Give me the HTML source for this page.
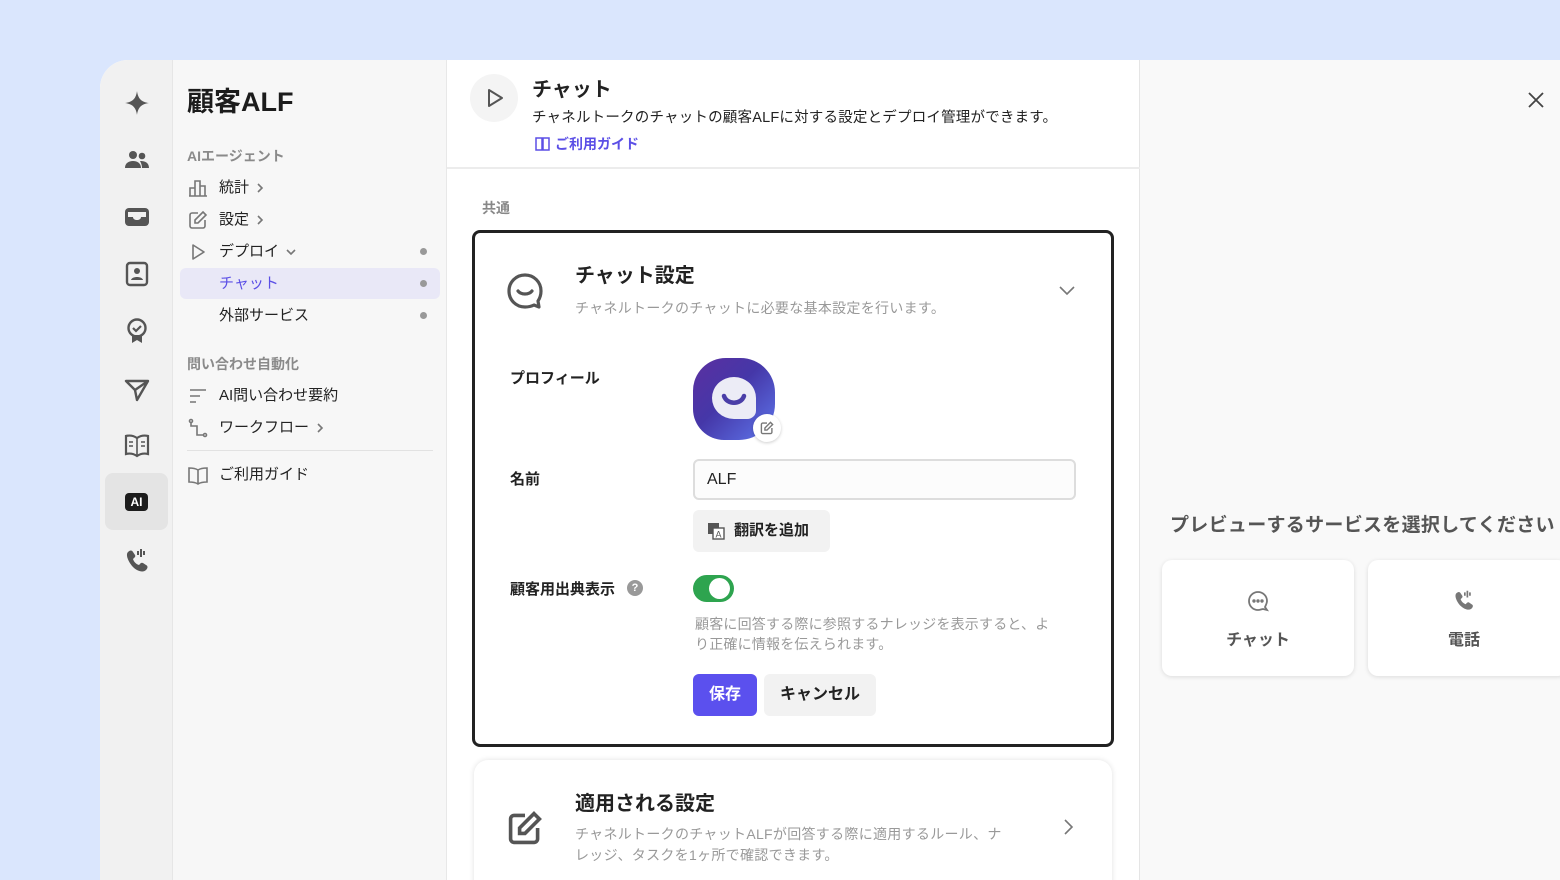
<!DOCTYPE html>
<html><head><meta charset="utf-8"><style>
*{box-sizing:border-box;margin:0;padding:0}
body{width:1560px;height:880px;background:#dae6fd;font-family:"Liberation Sans","Noto Sans CJK JP",sans-serif;color:#222;overflow:hidden;position:relative}
.app{position:absolute;left:100px;top:60px;width:1460px;height:820px;border-top-left-radius:28px;overflow:hidden;background:#fff}
.rail{position:absolute;left:0;top:0;width:73px;height:820px;background:#f1f1f1;border-right:1px solid #e6e6e6}
.rail svg{position:absolute;left:24px}
.nav{position:absolute;left:73px;top:0;width:274px;height:820px;background:#f7f7f7;border-right:1px solid #e8e8e8}
.main{position:absolute;left:347px;top:0;width:693px;height:820px;background:#fff;border-right:1px solid #e5e5e5}
.right{position:absolute;left:1040px;top:0;width:420px;height:820px;background:#f9f9f9}
.abs{position:absolute}
.nv{position:absolute;left:46px;font-size:15px;color:#222;white-space:nowrap}
.nv svg{display:inline-block;vertical-align:middle;margin-left:6px}
.sec{position:absolute;left:14px;font-size:14px;color:#8a8a8a;font-weight:bold}
.dot{position:absolute;left:247px;width:7px;height:7px;border-radius:50%;background:#999}
.ico{position:absolute;left:15px}
.lbl{position:absolute;left:35px;font-size:15px;font-weight:bold;color:#222}
</style></head><body>
<div class="app">
<div class="rail">
<svg style="top:30px" width="26" height="26" viewBox="0 0 24 24"><path d="M12 1 C13 8 16 11 23 12 C16 13 13 16 12 23 C11 16 8 13 1 12 C8 11 11 8 12 1Z" fill="#555"/></svg>
<svg style="top:88px" width="26" height="24" viewBox="0 0 26 24"><circle cx="9" cy="7" r="4" fill="#555"/><circle cx="18" cy="8" r="3.3" fill="#555"/><path d="M1 20c0-5 4-7 8-7s8 2 8 7z" fill="#555"/><path d="M16 13c4 0 9 1 9 7h-7c0-3-1-5-2-7z" fill="#555"/></svg>
<svg style="top:145px" width="26" height="24" viewBox="0 0 26 24"><rect x="1" y="3" width="24" height="18" rx="4" fill="#555"/><path d="M4 7h18v5h-5c0 2-2 3-4 3s-4-1-4-3H4z" fill="#f1f1f1"/></svg>
<svg style="top:201px" width="26" height="26" viewBox="0 0 26 26"><rect x="3" y="2" width="20" height="22" rx="3" fill="none" stroke="#555" stroke-width="2.4"/><circle cx="13" cy="10" r="3" fill="#555"/><path d="M7 19c1-4 11-4 12 0z" fill="#555"/></svg>
<svg style="top:257px" width="26" height="28" viewBox="0 0 26 28"><circle cx="13" cy="11" r="8.5" fill="none" stroke="#555" stroke-width="2.4"/><path d="M9 11l3 3 5-5" fill="none" stroke="#555" stroke-width="2.2"/><path d="M8 18v8l5-3 5 3v-8" fill="#555"/></svg>
<svg style="top:318px" width="26" height="24" viewBox="0 0 26 24"><path d="M2 3h22L13 22 11 12z M11 12 24 3" fill="none" stroke="#555" stroke-width="2.4" stroke-linejoin="round"/></svg>
<svg style="top:372px" width="26" height="26" viewBox="0 0 26 26"><path d="M2 4c4-1 8 0 11 2 3-2 7-3 11-2v18c-4-1-8 0-11 2-3-2-7-3-11-2z" fill="none" stroke="#555" stroke-width="2.2"/><path d="M13 6v18M5 10h4M5 14h4M17 10h4M17 14h4" stroke="#555" stroke-width="1.6"/></svg>
<div class="abs" style="left:5px;top:413px;width:63px;height:57px;background:#e4e4e4;border-radius:8px"></div>
<div class="abs" style="left:25px;top:433px;width:23px;height:18px;background:#1c1c1c;border-radius:4px;color:#fff;font-size:12px;font-weight:bold;text-align:center;line-height:18px">AI</div>
<svg style="top:487px" width="26" height="26" viewBox="0 0 26 26"><path d="M4 5c2-2 4-2 5 0l2 3c1 2-1 3-2 4 1 3 3 5 6 6 1-1 2-3 4-2l3 2c2 1 2 3 0 5-3 3-9 1-13-3S1 8 4 5z" fill="#555"/><path d="M17 2v8M20 4v4M14 4v4" stroke="#555" stroke-width="2"/></svg>
</div>

<div class="nav">
<div class="abs" style="left:14px;top:20px;font-size:27px;font-weight:bold;color:#1c1c1c">顧客ALF</div>
<div class="sec" style="top:86px">AIエージェント</div>
<svg class="ico" style="top:118px" width="20" height="20" viewBox="0 0 20 20" fill="none" stroke="#777" stroke-width="1.6"><path d="M2 18V10h5v8M7 18V3h5v15M12 18V8h5v10zM1 18h18"/></svg>
<div class="nv" style="top:116px">統計<svg width="10" height="12" viewBox="0 0 10 12" fill="none" stroke="#777" stroke-width="1.6"><path d="M3 2l4 4-4 4"/></svg></div>
<svg class="ico" style="top:150px" width="20" height="20" viewBox="0 0 20 20" fill="none" stroke="#777" stroke-width="1.6"><path d="M10 3H4a2 2 0 0 0-2 2v11a2 2 0 0 0 2 2h11a2 2 0 0 0 2-2v-6"/><path d="M15 2l3 3-8 8H7v-3z"/></svg>
<div class="nv" style="top:148px">設定<svg width="10" height="12" viewBox="0 0 10 12" fill="none" stroke="#777" stroke-width="1.6"><path d="M3 2l4 4-4 4"/></svg></div>
<svg class="ico" style="top:182px" width="20" height="20" viewBox="0 0 20 20" fill="none" stroke="#777" stroke-width="1.6"><path d="M5 3l11 7-11 7z" stroke-linejoin="round"/></svg>
<div class="nv" style="top:180px">デプロイ<svg width="12" height="10" viewBox="0 0 12 10" fill="none" stroke="#777" stroke-width="1.6"><path d="M2 3l4 4 4-4"/></svg></div>
<div class="dot" style="top:188px"></div>
<div class="abs" style="left:7px;top:208px;width:260px;height:31px;background:#e9e8f7;border-radius:6px"></div>
<div class="nv" style="top:212px;color:#5b4fe6">チャット</div>
<div class="dot" style="top:220px"></div>
<div class="nv" style="top:244px">外部サービス</div>
<div class="dot" style="top:252px"></div>
<div class="sec" style="top:294px">問い合わせ自動化</div>
<svg class="ico" style="top:326px" width="20" height="20" viewBox="0 0 20 20" fill="none" stroke="#777" stroke-width="1.6"><path d="M2 4h16M2 10h10M2 16h6"/></svg>
<div class="nv" style="top:324px">AI問い合わせ要約</div>
<svg class="ico" style="top:358px" width="20" height="20" viewBox="0 0 20 20" fill="none" stroke="#777" stroke-width="1.6"><circle cx="3" cy="3" r="1.5"/><circle cx="17" cy="17" r="1.5"/><path d="M3 5v3h6v9h6"/></svg>
<div class="nv" style="top:356px">ワークフロー<svg width="10" height="12" viewBox="0 0 10 12" fill="none" stroke="#777" stroke-width="1.6"><path d="M3 2l4 4-4 4"/></svg></div>
<div class="abs" style="left:14px;top:390px;width:246px;height:1px;background:#e2e2e2"></div>
<svg class="ico" style="top:405px" width="20" height="20" viewBox="0 0 20 20" fill="none" stroke="#777" stroke-width="1.6"><path d="M1 3c3 0 6 0 9 2 3-2 6-2 9-2v14c-3 0-6 0-9 2-3-2-6-2-9-2zM10 5v14"/></svg>
<div class="nv" style="top:403px">ご利用ガイド</div>
</div>

<div class="main">
<div class="abs" style="left:23px;top:14px;width:48px;height:48px;border-radius:50%;background:#f4f4f4"></div>
<svg class="abs" style="left:37px;top:27px" width="22" height="22" viewBox="0 0 22 22" fill="none" stroke="#555" stroke-width="2"><path d="M5 3l13 8-13 8z" stroke-linejoin="round"/></svg>
<div class="abs" style="left:85px;top:13px;font-size:20px;font-weight:bold">チャット</div>
<div class="abs" style="left:85px;top:46px;font-size:14.5px;letter-spacing:0.2px;color:#222;white-space:nowrap">チャネルトークのチャットの顧客ALFに対する設定とデプロイ管理ができます。</div>
<svg class="abs" style="left:88px;top:77px" width="15" height="14" viewBox="0 0 15 14" fill="none" stroke="#5b4fe6" stroke-width="1.5"><path d="M1 1h6v12H1zM8 1h6v12H8z"/></svg>
<div class="abs" style="left:108px;top:74px;font-size:14px;color:#5b4fe6;font-weight:bold">ご利用ガイド</div>
<div class="abs" style="left:0;top:107px;width:693px;height:2px;background:#ececec"></div>
<div class="abs" style="left:35px;top:138px;font-size:14px;color:#888;font-weight:bold">共通</div>

<div class="abs" style="left:25px;top:170px;width:642px;height:517px;border:3px solid #222;border-radius:8px;background:#fff">
<svg class="abs" style="left:30px;top:38px" width="40" height="40" viewBox="0 0 40 40" fill="none" stroke="#555" stroke-width="3.2"><path d="M33 30c2-3 3-6 3-10C36 11 29 4 20 4S4 11 4 20s7 16 16 16c4 0 7-1 9-2l5 2z" stroke-linejoin="round"/><path d="M13 20c3 4 11 4 14 0" stroke-linecap="round"/></svg>
<div class="abs" style="left:100px;top:26px;font-size:20px;font-weight:bold">チャット設定</div>
<div class="abs" style="left:100px;top:65px;font-size:14px;color:#999;letter-spacing:0.3px">チャネルトークのチャットに必要な基本設定を行います。</div>
<svg class="abs" style="left:583px;top:52px" width="18" height="12" viewBox="0 0 18 12" fill="none" stroke="#777" stroke-width="1.6"><path d="M2 2l7 7 7-7"/></svg>
<div class="lbl" style="top:134px">プロフィール</div>
<div class="abs" style="left:218px;top:125px;width:82px;height:82px;border-radius:40% 42% 44% 38%;background:linear-gradient(135deg,#5b2fa0 0%,#4537a8 45%,#5a6be0 90%)"></div>
<div class="abs" style="left:237px;top:144px;width:44px;height:42px;border-radius:50% 50% 20% 50%;background:#ececf6"></div>
<svg class="abs" style="left:246px;top:160px" width="26" height="14" viewBox="0 0 26 14"><path d="M3 3c3 9 17 9 20 0" fill="none" stroke="#4a3ea8" stroke-width="4.5" stroke-linecap="round"/></svg>
<div class="abs" style="left:278px;top:181px;width:28px;height:28px;border-radius:50%;background:#fff;box-shadow:0 1px 3px rgba(0,0,0,.2)"></div>
<svg class="abs" style="left:285px;top:188px" width="14" height="14" viewBox="0 0 20 20" fill="none" stroke="#777" stroke-width="2"><path d="M10 3H4a2 2 0 0 0-2 2v11a2 2 0 0 0 2 2h11a2 2 0 0 0 2-2v-6"/><path d="M15 2l3 3-8 8H7v-3z"/></svg>
<div class="lbl" style="top:235px">名前</div>
<div class="abs" style="left:218px;top:226px;width:383px;height:41px;border:2px solid #ddd;border-radius:6px;background:#fcfcfc;font-size:16px;padding:10px 12px;color:#222">ALF</div>
<div class="abs" style="left:218px;top:277px;width:137px;height:42px;border-radius:6px;background:#f2f2f2"></div>
<svg class="abs" style="left:232px;top:289px" width="18" height="18" viewBox="0 0 18 18"><rect x="1" y="1" width="11" height="11" fill="#555"/><rect x="6" y="6" width="11" height="11" fill="#fff" stroke="#555" stroke-width="1.4"/><text x="8.5" y="15.5" font-size="9" fill="#555" font-family="Liberation Sans">A</text></svg>
<div class="abs" style="left:259px;top:286px;font-size:15px;font-weight:bold">翻訳を追加</div>
<div class="lbl" style="top:345px">顧客用出典表示</div>
<div class="abs" style="left:152px;top:347px;width:16px;height:16px;border-radius:50%;background:#999;color:#fff;font-size:11px;text-align:center;line-height:16px;font-weight:bold">?</div>
<div class="abs" style="left:218px;top:342px;width:41px;height:27px;border-radius:14px;background:#2ea44f"></div>
<div class="abs" style="left:234px;top:345px;width:21px;height:21px;border-radius:50%;background:#fff"></div>
<div class="abs" style="left:220px;top:381px;width:362px;font-size:14px;color:#999;line-height:20px;letter-spacing:0.2px">顧客に回答する際に参照するナレッジを表示すると、より正確に情報を伝えられます。</div>
<div class="abs" style="left:218px;top:441px;width:64px;height:42px;border-radius:6px;background:#5b50ee;color:#fff;font-size:16px;font-weight:bold;text-align:center;line-height:42px">保存</div>
<div class="abs" style="left:289px;top:441px;width:112px;height:42px;border-radius:6px;background:#f2f2f2;font-size:16px;font-weight:bold;text-align:center;line-height:42px">キャンセル</div>
</div>

<div class="abs" style="left:27px;top:700px;width:638px;height:140px;border-radius:14px;background:#fff;box-shadow:0 0 6px rgba(0,0,0,.12)">
<svg class="abs" style="left:33px;top:50px" width="36" height="36" viewBox="0 0 20 20" fill="none" stroke="#555" stroke-width="2"><path d="M10 3H4a2 2 0 0 0-2 2v11a2 2 0 0 0 2 2h11a2 2 0 0 0 2-2v-6"/><path d="M15 2l3 3-8 8H7v-3z"/></svg>
<div class="abs" style="left:101px;top:27px;font-size:20px;font-weight:bold">適用される設定</div>
<div class="abs" style="left:101px;top:64px;width:436px;font-size:14px;color:#999;line-height:21px;letter-spacing:0.3px">チャネルトークのチャットALFが回答する際に適用するルール、ナレッジ、タスクを1ヶ所で確認できます。</div>
<svg class="abs" style="left:588px;top:58px" width="12" height="18" viewBox="0 0 12 18" fill="none" stroke="#777" stroke-width="1.6"><path d="M3 2l7 7-7 7"/></svg>
</div>
</div>

<div class="right">
<svg class="abs" style="left:387px;top:31px" width="18" height="18" viewBox="0 0 18 18" stroke="#444" stroke-width="1.8"><path d="M2 2l14 14M16 2L2 16"/></svg>
<div class="abs" style="left:30px;top:450px;font-size:19px;font-weight:bold;color:#555;white-space:nowrap;letter-spacing:0.3px">プレビューするサービスを選択してください</div>
<div class="abs" style="left:22px;top:500px;width:192px;height:116px;border-radius:10px;background:#fff;box-shadow:0 1px 5px rgba(0,0,0,.12)"></div>
<svg class="abs" style="left:107px;top:530px" width="22" height="22" viewBox="0 0 22 22" fill="none" stroke="#777" stroke-width="1.8"><path d="M18 17c1-2 2-4 2-6 0-5-4-9-9-9s-9 4-9 9 4 9 9 9c2 0 4-1 5-1l4 1z"/><circle cx="7" cy="11" r=".8" fill="#777"/><circle cx="11" cy="11" r=".8" fill="#777"/><circle cx="15" cy="11" r=".8" fill="#777"/></svg>
<div class="abs" style="left:22px;top:566px;width:192px;text-align:center;font-size:16px;font-weight:bold;color:#555">チャット</div>
<div class="abs" style="left:228px;top:500px;width:200px;height:116px;border-radius:10px;background:#fff;box-shadow:0 1px 5px rgba(0,0,0,.12)"></div>
<svg class="abs" style="left:313px;top:529px" width="22" height="22" viewBox="0 0 26 26"><path d="M4 5c2-2 4-2 5 0l2 3c1 2-1 3-2 4 1 3 3 5 6 6 1-1 2-3 4-2l3 2c2 1 2 3 0 5-3 3-9 1-13-3S1 8 4 5z" fill="#777"/><path d="M17 2v8M20 4v4M14 4v4" stroke="#777" stroke-width="2"/></svg>
<div class="abs" style="left:228px;top:566px;width:192px;text-align:center;font-size:16px;font-weight:bold;color:#555">電話</div>
</div>
</div>
</body></html>
